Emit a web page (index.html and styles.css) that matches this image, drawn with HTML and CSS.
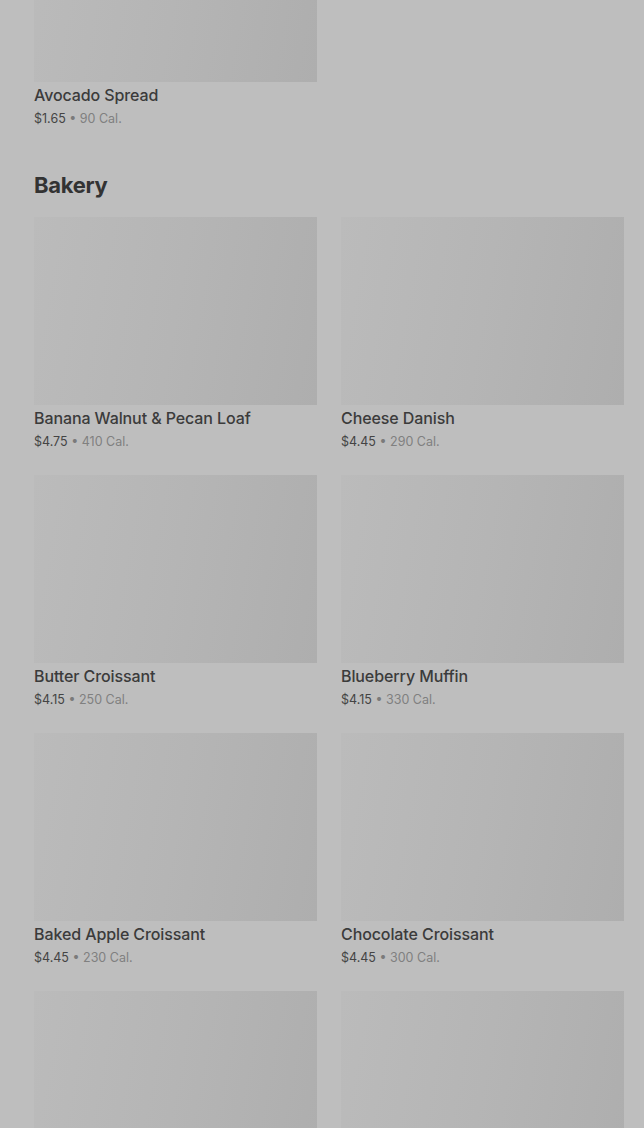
FILE: index.html
```html
<!DOCTYPE html>
<html>
  <head>
    <title>Menu</title>
    <meta charset='utf-8'>
    <link rel="stylesheet" href="styles.css">
  </head>

  <body>
    <div class="page">
      <!-- previous section, scrolled past -->
      <div class="grid">
        <div class="item">
          <div class="thumb"></div>
          <div class="name">Avocado Spread</div>
          <div class="meta"><span class="price">$1.65</span> • <span class="cal">90 Cal.</span></div>
        </div>
      </div>

      <h2 class="section-title">Bakery</h2>
      <div class="grid">
        <div class="item">
          <div class="thumb"></div>
          <div class="name">Banana Walnut &amp; Pecan Loaf</div>
          <div class="meta"><span class="price">$4.75</span> • <span class="cal">410 Cal.</span></div>
        </div>
        <div class="item">
          <div class="thumb"></div>
          <div class="name">Cheese Danish</div>
          <div class="meta"><span class="price">$4.45</span> • <span class="cal">290 Cal.</span></div>
        </div>
        <div class="item">
          <div class="thumb"></div>
          <div class="name">Butter Croissant</div>
          <div class="meta"><span class="price">$4.15</span> • <span class="cal">250 Cal.</span></div>
        </div>
        <div class="item">
          <div class="thumb"></div>
          <div class="name">Blueberry Muffin</div>
          <div class="meta"><span class="price">$4.15</span> • <span class="cal">330 Cal.</span></div>
        </div>
        <div class="item">
          <div class="thumb"></div>
          <div class="name">Baked Apple Croissant</div>
          <div class="meta"><span class="price">$4.45</span> • <span class="cal">230 Cal.</span></div>
        </div>
        <div class="item">
          <div class="thumb"></div>
          <div class="name">Chocolate Croissant</div>
          <div class="meta"><span class="price">$4.45</span> • <span class="cal">300 Cal.</span></div>
        </div>
        <div class="item">
          <div class="thumb"></div>
        </div>
        <div class="item">
          <div class="thumb"></div>
        </div>
      </div>
    </div>
  </body>
</html>
```

FILE: styles.css
```css
html, body {
  margin: 0;
  background: #bebebe;
  font-family: Inter, "Noto Sans", "Liberation Sans", sans-serif;
  overflow: hidden;
}

.page {
  margin-top: -106px;
  padding: 0 20px 0 34px;
}

.grid {
  display: grid;
  grid-template-columns: 283px 283px;
  column-gap: 24px;
  row-gap: 24px;
}

.thumb {
  height: 188px;
  background: linear-gradient(100deg, #bbbbbb 0%, #b5b5b5 50%, #aeaeae 100%);
}

.name {
  margin-top: 3px;
  font-size: 16px;
  line-height: 20px;
  font-weight: 500;
  color: #3b3b3b;
  letter-spacing: -0.1px;
}

.meta {
  margin-top: 4px;
  font-size: 12.5px;
  line-height: 19px;
  color: #7a7a7a;
}

.price {
  color: #444444;
}

.cal {
  color: #808080;
}

.section-title {
  margin: 41px 0 16px;
  font-size: 22px;
  line-height: 32px;
  font-weight: 700;
  color: #333333;
  letter-spacing: -0.3px;
}
```
